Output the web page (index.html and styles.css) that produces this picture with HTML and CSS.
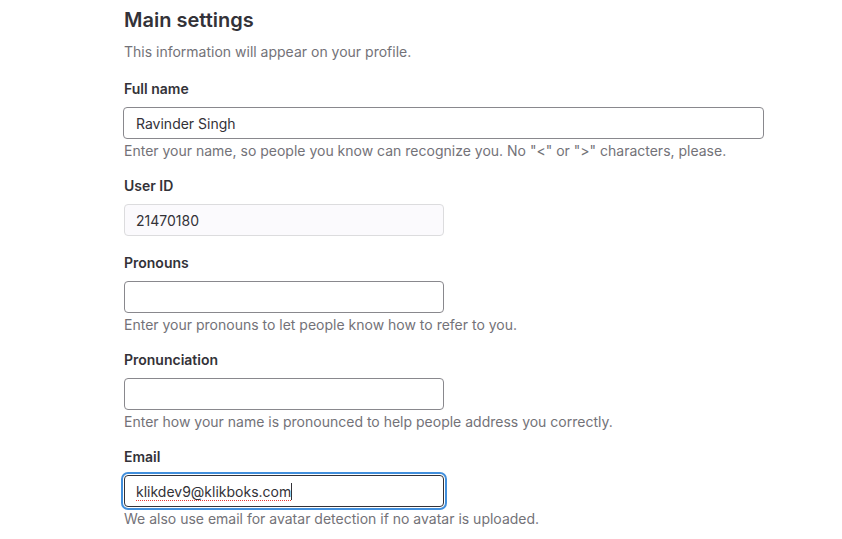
FILE: index.html
```html
<!DOCTYPE html>
<html lang="en">
<head>
<meta charset="utf-8">
<link rel="stylesheet" href="styles.css">
</head>
<body>
<main class="settings">
  <h2 class="title">Main settings</h2>
  <p class="lead">This information will appear on your profile.</p>

  <div class="group">
    <label class="label">Full name</label>
    <input class="input wide" type="text" value="Ravinder Singh">
    <small class="help">Enter your name, so people you know can recognize you. No "&lt;" or "&gt;" characters, please.</small>
  </div>

  <div class="group">
    <label class="label">User ID</label>
    <input class="input readonly" type="text" value="21470180" readonly>
  </div>

  <div class="group">
    <label class="label">Pronouns</label>
    <input class="input" type="text" value="">
    <small class="help">Enter your pronouns to let people know how to refer to you.</small>
  </div>

  <div class="group">
    <label class="label">Pronunciation</label>
    <input class="input" type="text" value="">
    <small class="help">Enter how your name is pronounced to help people address you correctly.</small>
  </div>

  <div class="group">
    <label class="label">Email</label>
    <div class="input focused"><span class="typed">klikdev9@klikboks.com</span><span class="caret"></span></div>
    <small class="help">We also use email for avatar detection if no avatar is uploaded.</small>
  </div>
</main>
</body>
</html>
```

FILE: styles.css
```css
* { box-sizing: border-box; }
html, body { margin: 0; padding: 0; background: #fff; }
body {
  font-family: Inter, "Noto Sans", sans-serif;
  color: #333238;
  font-size: 14px;
}
.settings {
  padding: 6px 0 0 124px;
  width: 764px;
}
.title {
  margin: 0;
  font-size: 20px;
  line-height: 28px;
  font-weight: 600;
  color: #333238;
}
.lead {
  margin: 8px 0 0;
  font-size: 14px;
  line-height: 20px;
  color: #737278;
}
.group {
  display: flex;
  flex-direction: column;
  align-items: flex-start;
  margin-top: 16.5px;
}
.group + .group { margin-top: 16.5px; }
.label {
  font-weight: 600;
  font-size: 14px;
  line-height: 20px;
  margin-bottom: 8.5px;
  color: #333238;
}
.input {
  display: flex;
  align-items: center;
  width: 320px;
  height: 32px;
  padding: 0 12px 0 11px;
  border: 1px solid #89888d;
  border-radius: 4px;
  font-family: Inter, "Noto Sans", sans-serif;
  font-size: 14px;
  color: #333238;
  background: #fff;
  outline: none;
}
.wide { width: 641px; margin-left: -1px; padding-left: 12px; }
.readonly {
  background: #fbfafd;
  border-color: #dcdcde;
}
.focused {
  border-color: #333238;
  box-shadow: 0 0 0 1px #fff, 0 0 0 3px #428fdc;
}
.typed {
  text-decoration: underline dotted #e53935;
  text-decoration-thickness: 1px;
  text-underline-offset: 3px;
}
.caret {
  width: 1px;
  height: 17px;
  background: #333238;
}
.help {
  margin-top: 4px;
  font-size: 14px;
  line-height: 16px;
  color: #737278;
}
```
